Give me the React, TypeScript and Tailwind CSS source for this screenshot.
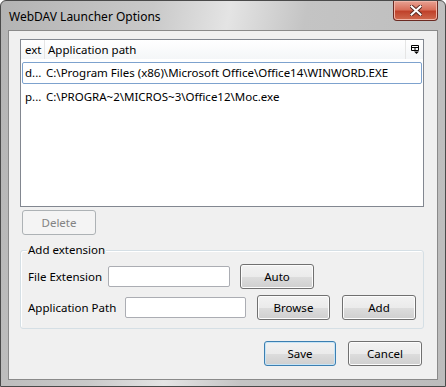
import React from 'react';

const font = { fontFamily: '"Noto Sans", "Open Sans", sans-serif' };

const Btn: React.FC<{ label: string; className?: string; disabled?: boolean; focused?: boolean }> = ({
  label,
  className = '',
  disabled,
  focused,
}) => (
  <button
    disabled={disabled}
    className={`h-[25px] rounded-[3px] border text-[11.5px] leading-none ${
      disabled
        ? 'border-[#adb2b5] bg-[#f4f4f4] text-[#838383]'
        : focused
          ? 'border-[#3c7fb1] bg-[linear-gradient(#f2f2f2_0%,#ebebeb_50%,#dddddd_51%,#cfcfcf_100%)] text-black shadow-[inset_0_0_0_1px_#c6e4f6]'
          : 'border-[#707070] bg-[linear-gradient(#f2f2f2_0%,#ebebeb_50%,#dddddd_51%,#cfcfcf_100%)] text-black shadow-[inset_0_0_0_1px_#fcfcfc]'
    } ${className}`}
  >
    {label}
  </button>
);

const rows = [
  { ext: 'd...', path: 'C:\\Program Files (x86)\\Microsoft Office\\Office14\\WINWORD.EXE' },
  { ext: 'p...', path: 'C:\\PROGRA~2\\MICROS~3\\Office12\\Moc.exe' },
];

export default function App() {
  return (
    <div className="w-[446px] h-[387px] bg-white" style={font}>
      <div className="flex h-full w-full flex-col rounded-t-[6px] border border-[#4a4a4a] bg-[linear-gradient(100deg,#b3b3b3_0%,#c9c9c9_30%,#e4e4e4_45%,#c4c4c4_60%,#bcbcbc_100%)] px-[7px] pb-[6px]">
        {/* Title bar */}
        <div className="flex h-[29px] shrink-0 items-start justify-between">
          <span className="mt-[7px] pl-[1px] text-[12px] text-black">WebDAV Launcher Options</span>
          <div className="flex h-[20px] w-[45px] items-center justify-center rounded-b-[4px] border border-t-0 border-[#6b2a22] bg-[linear-gradient(#e8a293_0%,#d9705c_45%,#c0422b_55%,#cf6a4f_100%)] shadow-[inset_0_0_0_1px_#f0b5a8]">
            <svg width="12" height="11" viewBox="0 0 12 11">
              <path d="M1.5 1.5 L10.5 9.5 M10.5 1.5 L1.5 9.5" stroke="#5a2a22" strokeWidth="4" strokeLinecap="square" />
              <path d="M1.5 1.5 L10.5 9.5 M10.5 1.5 L1.5 9.5" stroke="#ffffff" strokeWidth="2" strokeLinecap="square" />
            </svg>
          </div>
        </div>

        {/* Client area */}
        <div className="flex flex-1 flex-col border border-[#8a8a8a] bg-[#f0f0f0] pl-[11px] pt-[8px] text-[11.5px] text-black">
          {/* List view */}
          <div className="flex h-[168px] w-[404px] flex-col border border-[#828790] bg-white">
            <div className="flex h-[19px] items-center bg-[linear-gradient(#ffffff,#f4f6f8)]">
              <div className="flex h-full w-[24px] items-center border-r border-[#e5e5e5] pl-[4px]">ext</div>
              <div className="flex h-full flex-1 items-center border-r border-[#e5e5e5] pl-[3px]">Application path</div>
              <div className="flex h-full w-[17px] items-center justify-center">
                <svg width="8" height="9" viewBox="0 0 8 9">
                  <path d="M0.5 0.5 H7.5 V5.5 H0.5 Z M0.5 2.5 H7.5 M4 2.5 V5.5" fill="none" stroke="#000" strokeWidth="1" />
                  <path d="M3 6.5 H8 L5.5 9 Z" fill="#000" />
                </svg>
              </div>
            </div>
            <div className="mt-[3px] flex flex-col px-[1px]">
              {rows.map((r, i) => (
                <div
                  key={i}
                  className={`flex h-[22px] items-center rounded-[2px] border ${
                    i === 0 ? 'border-[#7da2ce]' : 'border-transparent'
                  } ${i === 1 ? 'mt-[2px]' : ''}`}
                >
                  <span className="w-[23px] pl-[2px]">{r.ext}</span>
                  <span className="whitespace-nowrap">{r.path}</span>
                </div>
              ))}
            </div>
          </div>

          <Btn label="Delete" disabled className="ml-[2px] mt-[3px] w-[74px]" />

          {/* Group box */}
          <div className="relative mt-[15px] h-[79px] w-[404px] rounded-[3px] border border-[#d5dfe5] shadow-[inset_1px_1px_0_#ffffff]">
            <span className="absolute left-[6px] top-[-10px] bg-[#f0f0f0] px-[1px]">Add extension</span>
            <div className="mt-[13px] flex items-center pl-[7px]">
              <span className="w-[80px]">File Extension</span>
              <input className="h-[21px] w-[122px] rounded-[2px] border border-[#abadb3] bg-white" />
              <Btn label="Auto" className="ml-[10px] w-[74px]" />
            </div>
            <div className="mt-[6px] flex items-center pl-[7px]">
              <span className="w-[97px]">Application Path</span>
              <input className="h-[21px] w-[121px] rounded-[2px] border border-[#abadb3] bg-white" />
              <Btn label="Browse" className="ml-[11px] w-[73px]" />
              <Btn label="Add" className="ml-[12px] w-[74px]" />
            </div>
          </div>

          <div className="mt-[12px] flex w-[402px] justify-end gap-[12px]">
            <Btn label="Save" focused className="w-[72px]" />
            <Btn label="Cancel" className="w-[74px]" />
          </div>
        </div>
      </div>
    </div>
  );
}
